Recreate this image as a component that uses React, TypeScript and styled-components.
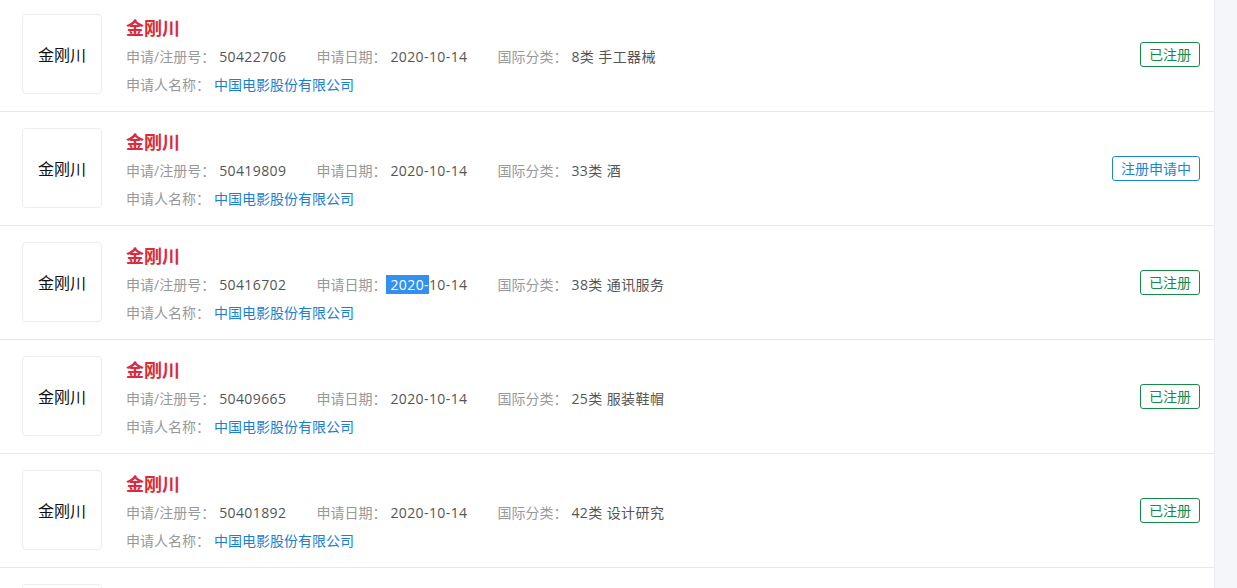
import styled, { createGlobalStyle } from "styled-components";

type Status = "registered" | "pending";

type Mark = {
  regNo: string;
  date: string;
  classNo: string;
  className: string;
  status: Status;
  highlightYear?: boolean;
};

const marks: Mark[] = [
  { regNo: "50422706", date: "2020-10-14", classNo: "8类", className: "手工器械", status: "registered" },
  { regNo: "50419809", date: "2020-10-14", classNo: "33类", className: "酒", status: "pending" },
  { regNo: "50416702", date: "2020-10-14", classNo: "38类", className: "通讯服务", status: "registered", highlightYear: true },
  { regNo: "50409665", date: "2020-10-14", classNo: "25类", className: "服装鞋帽", status: "registered" },
  { regNo: "50401892", date: "2020-10-14", classNo: "42类", className: "设计研究", status: "registered" },
  { regNo: "50399871", date: "2020-10-14", classNo: "41类", className: "教育娱乐", status: "registered" },
];

const statusText: Record<Status, string> = {
  registered: "已注册",
  pending: "注册申请中",
};

const GlobalStyle = createGlobalStyle`
  html, body {
    margin: 0;
    padding: 0;
    height: 100%;
    overflow: hidden;
    background: #f5f6fa;
  }
  body {
    font-family: "Open Sans", "Noto Sans CJK SC", sans-serif;
  }
`;

export default function App() {
  return (
    <>
      <GlobalStyle />
      <Page>
        <List>
          {marks.map((m, i) => (
            <Row key={i}>
              <Logo>金刚川</Logo>
              <Info>
                <Title>金刚川</Title>
                <MetaLine>
                  <Field>
                    <Label>申请/注册号：</Label>
                    <Value>{m.regNo}</Value>
                  </Field>
                  <Field>
                    <Label>申请日期：</Label>
                    {m.highlightYear ? (
                      <Value>
                        <Selected> 2020-</Selected>
                        {m.date.slice(5)}
                      </Value>
                    ) : (
                      <Value>{m.date}</Value>
                    )}
                  </Field>
                  <Field>
                    <Label>国际分类：</Label>
                    <Value>
                      {m.classNo} {m.className}
                    </Value>
                  </Field>
                </MetaLine>
                <MetaLine>
                  <Field>
                    <Label>申请人名称：</Label>
                    <Link>中国电影股份有限公司</Link>
                  </Field>
                </MetaLine>
              </Info>
              <Tag $status={m.status}>{statusText[m.status]}</Tag>
            </Row>
          ))}
        </List>
        <Side />
      </Page>
    </>
  );
}

const Page = styled.div`
  display: flex;
  height: 588px;
  overflow: hidden;
`;

const List = styled.div`
  width: 1214px;
  flex-shrink: 0;
  background: #fff;
  border-right: 1px solid #eceef3;
  margin-top: -2px;
`;

const Side = styled.div`
  flex: 1;
  background: #f5f6fa;
`;

const Row = styled.div`
  display: flex;
  align-items: center;
  padding: 16px 14px 17px 22px;
  border-bottom: 1px solid #e8e8e8;
`;

const Logo = styled.div`
  width: 78px;
  height: 78px;
  flex-shrink: 0;
  border: 1px solid #ededed;
  border-radius: 4px;
  display: flex;
  align-items: center;
  justify-content: center;
  font-size: 16px;
  color: #111;
`;

const Info = styled.div`
  flex: 1;
  align-self: flex-start;
  height: 80px;
  margin-left: 24px;
  display: flex;
  flex-direction: column;
`;

const Title = styled.div`
  font-size: 18px;
  font-weight: 700;
  color: #dc2b3b;
  line-height: 28px;
  margin-bottom: 1px;
`;

const MetaLine = styled.div`
  display: flex;
  font-size: 14px;
  line-height: 28px;
  flex-shrink: 0;
`;

const Field = styled.div`
  display: flex;
  margin-right: 30px;
  white-space: pre;
`;

const Label = styled.span`
  color: #999;
  margin-right: 4px;
`;

const Value = styled.span`
  color: #555;
  letter-spacing: 0.4px;
`;

const Selected = styled.span`
  background: #3390f0;
  color: #fff;
  margin-left: -4px;
`;

const Link = styled.span`
  color: #1a80d2;
`;

const Tag = styled.div<{ $status: Status }>`
  flex-shrink: 0;
  height: 23px;
  line-height: 23px;
  padding: 0 8px;
  font-size: 14px;
  border-radius: 3px;
  border: 1px solid ${({ $status }) => ($status === "registered" ? "#178a4a" : "#1a86d6")};
  color: ${({ $status }) => ($status === "registered" ? "#178a4a" : "#1a86d6")};
`;
